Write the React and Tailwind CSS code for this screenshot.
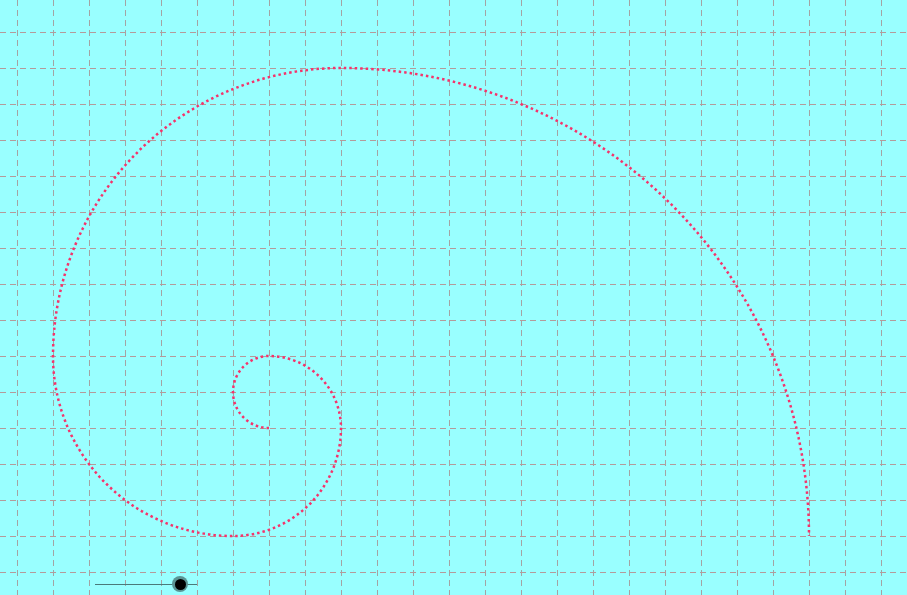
export default function App() {
  const xs = [];
  for (let x = 17; x < 907; x += 36) xs.push(x);
  const ys = [];
  for (let y = 32; y < 595; y += 36) ys.push(y);
  const d =
    "M269 428 A36 36 0 0 1 269 356 A72 72 0 0 1 341 428 A108 108 0 0 1 233 536 A180 180 0 0 1 53 356 A288 288 0 0 1 341 68 A468 468 0 0 1 809 536";
  return (
    <div className="relative w-[907px] h-[595px] bg-[#99ffff] overflow-hidden">
      <svg width="907" height="595" className="block">
        {xs.map((x) => (
          <line key={"v" + x} x1={x + 0.5} y1="0" x2={x + 0.5} y2="595" stroke="#a3a3a3" strokeWidth="1" strokeDasharray="6 4" />
        ))}
        {ys.map((y) => (
          <line key={"h" + y} x1="0" y1={y + 0.5} x2="907" y2={y + 0.5} stroke="#b49a9a" strokeWidth="1" strokeDasharray="6 4" />
        ))}
        <path d={d} fill="none" stroke="#f5336b" strokeWidth="2.5" strokeDasharray="2.5 3" />
      </svg>
      <div className="absolute left-[95px] top-[576px] w-[102px] h-[16px] flex items-center">
        <div className="w-full h-px bg-[#4a7a7a]" />
        <div className="absolute left-[77px] top-0 w-[16px] h-[16px] rounded-full bg-[#5a9494] flex items-center justify-center">
          <div className="w-[11px] h-[11px] rounded-full bg-black" />
        </div>
      </div>
    </div>
  );
}
